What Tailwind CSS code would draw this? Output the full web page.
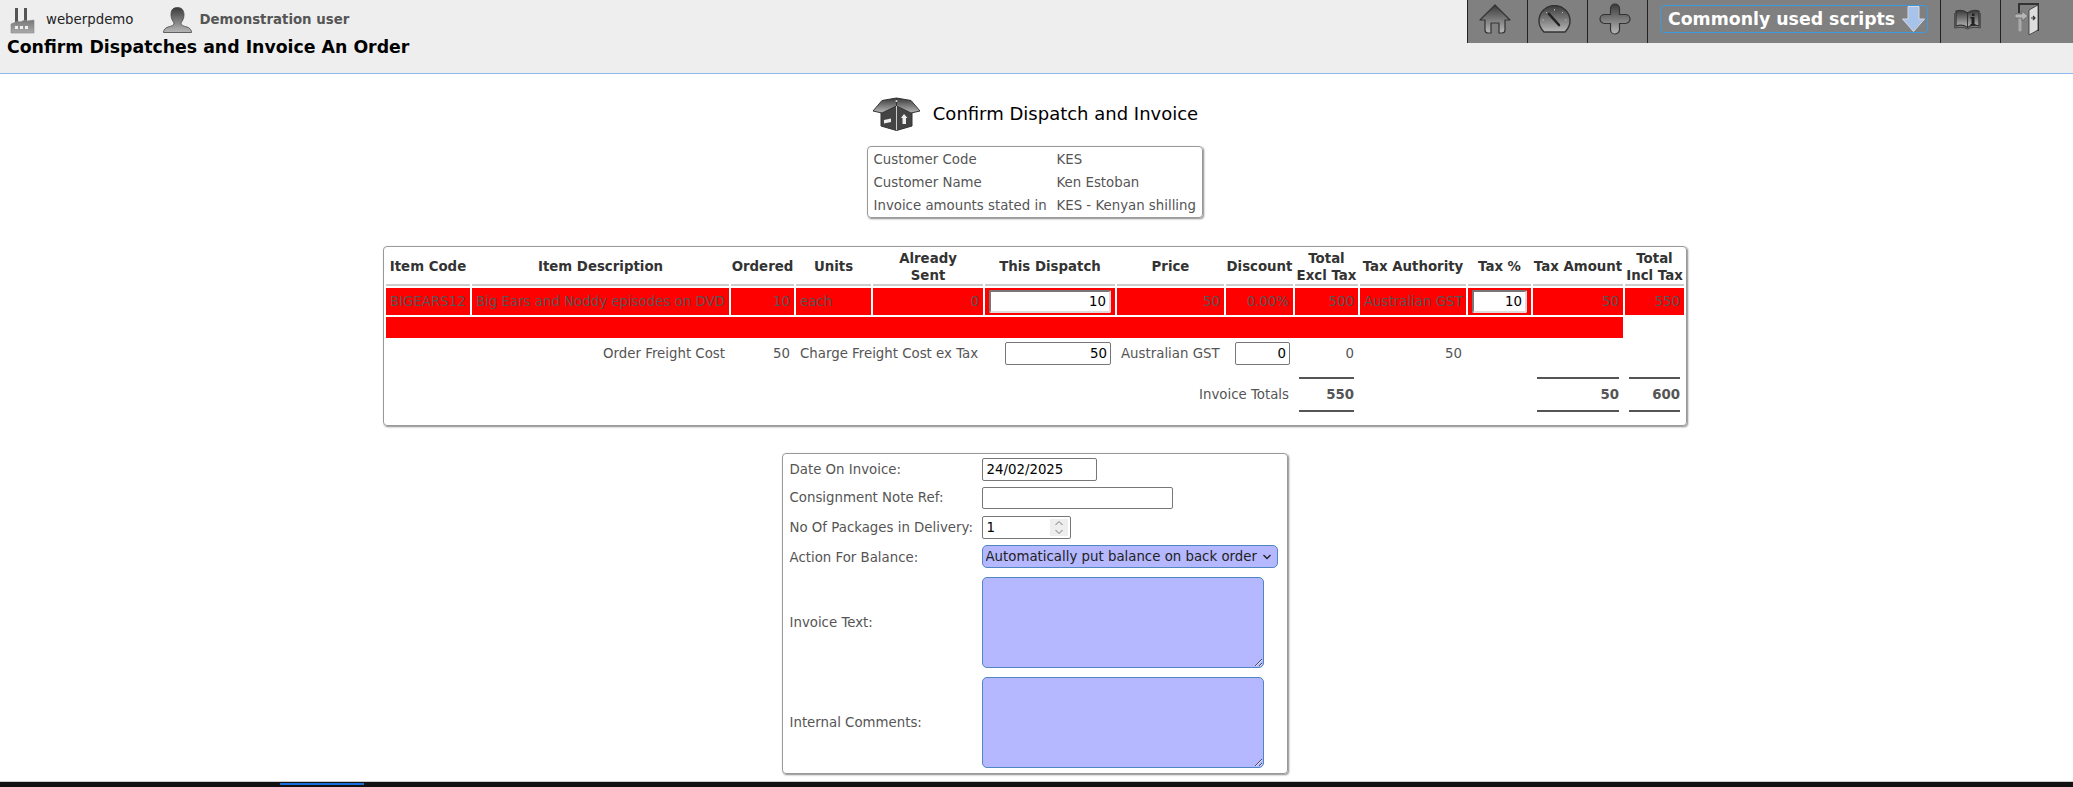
<!DOCTYPE html>
<html lang="en">
<head>
    <meta charset="UTF-8">
    <title>Confirm Dispatches and Invoice An Order</title>
    <script src="https://cdn.jsdelivr.net/npm/@tailwindcss/browser@4"></script>
</head>
<body class="h-[787px] overflow-hidden flex flex-col bg-white text-[#555] text-[13.33px] font-['DejaVu_Sans',sans-serif]">
    <!-- Header -->
    <header class="h-[74px] shrink-0 flex justify-between bg-[#eeeeee] border-b border-[#8ab8f0]">
        <div class="pl-[7px]">
            <div class="flex items-center h-[37px] pt-[2px]">
                <svg class="w-[26px] h-[28px] ml-[3px]" viewBox="0 0 26 28">
                    <defs>
                        <linearGradient id="darkToLight" x1="0" y1="0" x2="0" y2="1"><stop offset="0" stop-color="#3a3a3a"/><stop offset="1" stop-color="#b8b8b8"/></linearGradient>
                        <linearGradient id="bodyGrey" x1="0" y1="0" x2="0" y2="1"><stop offset="0" stop-color="#777"/><stop offset="1" stop-color="#aaa"/></linearGradient>
                    </defs>
                    <path d="M5 2h3v14H5zM14 2h3v14h-3z" fill="#555"/>
                    <path d="M1 18l7-3 2 1 5-2 2 1 7-1v13H1z" fill="url(#bodyGrey)" stroke="#888" stroke-width="0.6"/>
                    <path d="M5 20h3v3H5zM10 20h3v3h-3zM15 20h3v3h-3z" fill="#eee"/>
                </svg>
                <span class="ml-[10px] text-[#222]">weberpdemo</span>
                <svg class="w-[29px] h-[26px] ml-[29px]" viewBox="0 0 29 26">
                    <path d="M14.5 .5C20 .5 21 5 21 8c0 4-2 6-3 8 0 2 2 3 6 4 3 1 4.500 3 4.500 5.500H.5C.5 23 2 21 5 20c4-1 6-2 6-4-1-2-3-4-3-8 0-4 1-7.500 6.500-7.500z" fill="url(#darkToLight)" stroke="#444" stroke-width="0.8"/>
                </svg>
                <span class="ml-[8px] font-bold">Demonstration user</span>
            </div>
            <h1 class="text-[17.33px] font-bold text-black leading-[20px]">Confirm Dispatches and Invoice An Order</h1>
        </div>
        <nav class="flex w-[606px] shrink-0 h-[43px] bg-[#808080] text-white">
            <a class="w-[60px] flex items-start justify-center pt-[4px] pr-[6px] border-l border-[#222]">
                <svg class="w-[32px] h-[30px]" viewBox="0 0 32 30">
                    <path d="M16 1L31 16h-5v10q0 3-3 3h-3V19h-8v10H9q-3 0-3-3V16H1z" fill="url(#darkToLight)" stroke="#333" stroke-width="1.200" stroke-linejoin="round"/>
                </svg>
            </a>
            <a class="w-[60px] flex items-start justify-center pt-[5px] pr-[6px] border-l border-[#222]">
                <svg class="w-[33px] h-[28px]" viewBox="0 0 33 28">
                    <path d="M6 27C2 23 1 19 1 16a15.500 15.500 0 0 1 31 0c0 3-1 7-5 11z" fill="url(#darkToLight)" stroke="#333" stroke-width="1.400" stroke-linejoin="round"/>
                    <path d="M11 9l10 11" stroke="#222" stroke-width="2.600" stroke-linecap="round"/>
                    <path d="M16.500 4v1.500M8 7l1 1M25 7l-1 1M4.500 15H6M28.500 15H27" stroke="#bbb" stroke-width="1"/>
                </svg>
            </a>
            <a class="w-[60px] flex items-start justify-center pt-[3px] pr-[6px] border-l border-[#222]">
                <svg class="w-[32px] h-[32px]" viewBox="0 0 32 32">
                    <path d="M11.500 5.500a4.500 4.500 0 0 1 9 0v6h6a4.500 4.500 0 0 1 0 9h-6v6a4.500 4.500 0 0 1-9 0v-6h-6a4.500 4.500 0 0 1 0-9h6z" fill="url(#darkToLight)" stroke="#333" stroke-width="1.200"/>
                </svg>
            </a>
            <div class="w-[293px] flex items-start justify-center pt-[5px] border-l border-[#222]">
                <a class="w-[268px] h-[28px] flex items-center justify-between pl-[7px] pr-[2px] pt-[1px] border border-[#3d9ae0] rounded-[4px] text-[17.33px] font-bold leading-none">
                    Commonly used scripts
                    <svg class="w-[23px] h-[26px] mt-[-1px]" viewBox="0 0 23 26">
                        <path d="M6 .5h11V13h5.500L11.500 25.500.5 13H6z" fill="#a8c3ea" stroke="#d8d8e0" stroke-width="1"/>
                    </svg>
                </a>
            </div>
            <a class="w-[60px] flex items-start justify-center pt-[9px] pr-[6px] border-l border-[#222]">
                <svg class="w-[27px] h-[21px]" viewBox="0 0 27 21">
                    <path d="M13.500 4C10 1 5 1 2 2v15c3-1 8-1 11.500 1.500C17 16 22 16 25 17V2c-3-1-8-1-11.500 2z" fill="url(#darkToLight)" stroke="#333" stroke-width="1.200" stroke-linejoin="round"/>
                    <path d="M.7 4v15c4-1 9-1 12.800 1 3.800-2 8.800-2 12.800-1V4" fill="none" stroke="#444" stroke-width="1"/>
                    <path d="M13.500 4v15" stroke="#333" stroke-width="1"/>
                    <path d="M17.500 8h3v7h1v1.500h-5V15h1v-5.500h-1V8zM18 4.500h2.500V7H18z" fill="#222"/>
                </svg>
            </a>
            <a class="flex-1 flex items-start pt-[3px] pl-[14px] border-l border-[#222]">
                <svg class="w-[24px] h-[32px]" viewBox="0 0 24 32">
                    <path d="M4 10V1h19v27" fill="none" stroke="#333" stroke-width="2"/>
                    <path d="M14 7l9-5v25l-9 5z" fill="#ddd" stroke="#333" stroke-width="0.800"/>
                    <path d="M5 16v11" stroke="#aaa" stroke-width="3" stroke-linecap="round"/>
                    <path d="M0 11h7V8l6 5-6 5v-3H0z" fill="#b5b5b5" stroke="#555" stroke-width="0.600"/>
                    <path d="M16 15h4m-2-2l2 2-2 2" fill="none" stroke="#333" stroke-width="1.200"/>
                </svg>
            </a>
        </nav>
    </header>

    <main class="flex-1 flex flex-col items-center">
        <!-- Page title -->
        <div class="flex items-center h-[36px] mt-[21px] ml-[-2px] text-[18px] text-black">
            <svg class="w-[47px] h-[35px]" viewBox="0 0 47 35">
                <path d="M8 13l15.500-3L39 13v17l-15.500 4.500L8 30z" fill="#444" stroke="#333"/>
                <path d="M23.500 2L9 4.500 0 15l9 2 14.500-7z" fill="url(#darkToLight)" stroke="#333"/>
                <path d="M23.500 2L38 4.500 47 15l-9 2-14.500-7z" fill="url(#darkToLight)" stroke="#333"/>
                <path d="M23.500 10v24" stroke="#ccc" stroke-width="1"/>
                <path d="M11 24l7-1.500v3.500L11 27.500z" fill="#eee"/>
                <path d="M31 18l3.500 4H33v6h-3.500v-6H28z" fill="#eee"/>
                <circle cx="23.500" cy="5" r="1" fill="#ddd"/>
            </svg>
            <span class="ml-[13px]">Confirm Dispatch and Invoice</span>
        </div>

        <!-- Customer details -->
        <div class="mt-[15px] w-[336px] h-[72px] ml-[-4px] px-[6px] pt-[1px] border border-[#999] rounded-[4px] shadow-[1px_1px_2px_#888]">
            <div class="grid grid-cols-[183px_1fr] auto-rows-[23px] items-center">
                <span>Customer Code</span><span>KES</span>
                <span>Customer Name</span><span>Ken Estoban</span>
                <span>Invoice amounts stated in</span><span class="whitespace-nowrap">KES - Kenyan shilling</span>
            </div>
        </div>

        <!-- Order lines -->
        <div class="mt-[28px] w-[1304px] h-[180px] ml-[-3px] border border-[#999] rounded-[4px] shadow-[1px_1px_2px_#888]">
            <table class="table-fixed w-[1302px] border-separate border-spacing-[2px] leading-[17px]">
                <colgroup>
                    <col class="w-[84px]"><col class="w-[257px]"><col class="w-[63px]"><col class="w-[75px]"><col class="w-[110px]"><col class="w-[130px]"><col class="w-[107px]"><col class="w-[67px]"><col class="w-[63px]"><col class="w-[106px]"><col class="w-[63px]"><col class="w-[90px]"><col class="w-[59px]">
                </colgroup>
                <thead>
                    <tr class="h-[37px] text-center text-[#333] font-bold [&>th]:border-b-2 [&>th]:border-[#ccc] [&>th]:whitespace-nowrap">
                        <th>Item Code</th><th>Item Description</th><th>Ordered</th><th>Units</th><th>Already<br>Sent</th><th>This Dispatch</th><th>Price</th><th>Discount</th><th>Total<br>Excl Tax</th><th>Tax Authority</th><th>Tax %</th><th>Tax Amount</th><th>Total<br>Incl Tax</th>
                    </tr>
                </thead>
                <tbody>
                    <tr class="h-[27px] [&>td]:bg-[#ff0000] [&>td]:px-1 [&>td]:whitespace-nowrap">
                        <td>BIGEARS12</td>
                        <td>Big Ears and Noddy episodes on DVD</td>
                        <td class="text-right">10</td>
                        <td>each</td>
                        <td class="text-right">0</td>
                        <td><input value="10" class="w-full h-[23px] px-[3px] block text-right text-black bg-white border-2 border-[#777] border-r-[#ddd] border-b-[#ddd] rounded-[2px]"></td>
                        <td class="text-right">50</td>
                        <td class="text-right">0.00%</td>
                        <td class="text-right">500</td>
                        <td>Australian GST</td>
                        <td><input value="10" class="w-full h-[23px] px-[3px] block text-right text-black bg-white border-2 border-[#777] border-r-[#ddd] border-b-[#ddd] rounded-[2px]"></td>
                        <td class="text-right">50</td>
                        <td class="text-right">550</td>
                    </tr>
                    <tr class="h-[21px]">
                        <td colspan="12" class="bg-[#ff0000]"></td>
                        <td></td>
                    </tr>
                    <tr class="h-[27px] [&>td]:px-1 [&>td]:whitespace-nowrap">
                        <td colspan="2" class="text-right">Order Freight Cost</td>
                        <td class="text-right">50</td>
                        <td colspan="2">Charge Freight Cost ex Tax</td>
                        <td><input value="50" class="w-[106px] h-[23px] ml-auto px-[3px] block text-right text-black border border-[#777] rounded-[2px]"></td>
                        <td>Australian GST</td>
                        <td><input value="0" class="w-[55px] h-[23px] ml-auto mr-[-1px] px-[3px] block text-right text-black border border-[#777] rounded-[2px]"></td>
                        <td class="text-right">0</td>
                        <td class="text-right">50</td>
                        <td colspan="3"></td>
                    </tr>
                    <tr class="[&>td]:px-1 [&>td]:pt-[8px]">
                        <td colspan="8" class="text-right">Invoice Totals</td>
                        <td><div class="h-[35px] flex items-center justify-end font-bold border-y-2 border-[#555]">550</div></td>
                        <td colspan="2"></td>
                        <td><div class="h-[35px] flex items-center justify-end font-bold border-y-2 border-[#555]">50</div></td>
                        <td><div class="h-[35px] flex items-center justify-end font-bold border-y-2 border-[#555]">600</div></td>
                    </tr>
                </tbody>
            </table>
        </div>

        <!-- Invoice details -->
        <form class="mt-[27px] w-[506px] h-[321px] ml-[-4px] pl-[7px] pt-[4px] border border-[#999] rounded-[4px] shadow-[1px_1px_2px_#888]">
            <div class="flex items-center h-[23px] mb-[6px]">
                <label class="w-[192px]">Date On Invoice:</label>
                <input value="24/02/2025" class="w-[115px] h-full px-[4px] text-black border border-[#777] rounded-[2px]">
            </div>
            <div class="flex items-center h-[22px] mb-[7px]">
                <label class="w-[192px]">Consignment Note Ref:</label>
                <input class="w-[191px] h-full px-[4px] text-black border border-[#777] rounded-[2px]">
            </div>
            <div class="flex items-center h-[23px] mb-[6px]">
                <label class="w-[192px]">No Of Packages in Delivery:</label>
                <div class="relative w-[89px] h-full">
                    <input value="1" class="w-full h-full px-[4px] text-black border border-[#777] rounded-[2px]">
                    <span class="absolute right-[3px] top-[3px] w-[18px] h-[17px] bg-[#eee]">
                        <svg class="w-[18px] h-[17px]" viewBox="0 0 18 17"><path d="M5.500 6l3.500-3.500L12.500 6M5.500 11l3.500 3.500 3.500-3.500" fill="none" stroke="#777" stroke-width="1"/></svg>
                    </span>
                </div>
            </div>
            <div class="flex items-center h-[23px] mb-[9px]">
                <label class="w-[192px] pt-[2px]">Action For Balance:</label>
                <div class="relative w-[296px] h-full">
                    <select class="w-full h-full pl-[3px] appearance-none text-[#222] bg-[#b5b8ff] border border-[#4e87c4] rounded-[5px]">
                        <option>Automatically put balance on back order</option>
                    </select>
                    <svg class="absolute right-[6px] top-[8px] w-[10px] h-[8px]" viewBox="0 0 10 8"><path d="M1.500 2l3.500 3.500L8.500 2" fill="none" stroke="#222" stroke-width="1.400"/></svg>
                </div>
            </div>
            <div class="flex items-center h-[91px] mb-[9px]">
                <label class="w-[192px]">Invoice Text:</label>
                <textarea class="block w-[282px] h-full bg-[#b5b8ff] border border-[#4e87c4] rounded-[5px]"></textarea>
            </div>
            <div class="flex items-center h-[91px]">
                <label class="w-[192px]">Internal Comments:</label>
                <textarea class="block w-[282px] h-full bg-[#b5b8ff] border border-[#4e87c4] rounded-[5px]"></textarea>
            </div>
        </form>
    </main>

    <!-- Bottom edge -->
    <footer class="h-[6px] shrink-0 bg-[#111] border-t border-[#ccc] pt-[1px]">
        <div class="w-[84px] h-[2px] ml-[280px] bg-[#1a6fdc]"></div>
    </footer>
</body>
</html>
